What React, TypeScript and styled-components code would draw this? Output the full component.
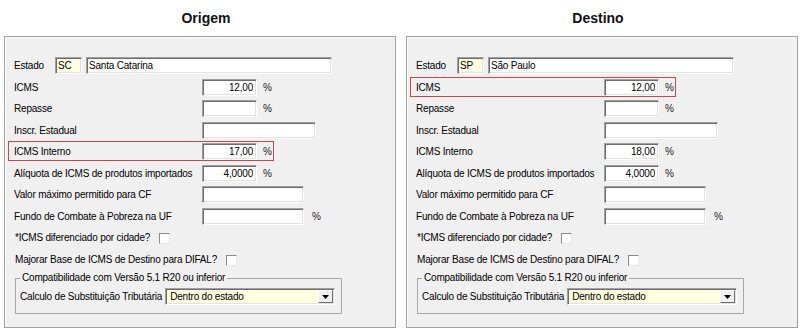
import React from "react";
import styled, { createGlobalStyle } from "styled-components";

const GlobalStyle = createGlobalStyle`
  html, body { margin: 0; padding: 0; background: #ffffff; }
  body { font-family: "Liberation Sans", Arial, sans-serif; color: #000; }
  #root { width: 800px; height: 331px; overflow: hidden; }
`;

const Page = styled.main`
  display: flex;
  gap: 10px;
  padding-left: 4px;
  width: 800px;
  height: 331px;
  box-sizing: border-box;
`;

const Column = styled.section`
  width: 392px;
  flex: none;
  display: flex;
  flex-direction: column;
`;

const Title = styled.h2<{ $shift: number }>`
  margin: 0;
  height: 36px;
  box-sizing: border-box;
  padding-top: 10px;
  padding-left: ${(p) => Math.max(0, p.$shift * 2)}px;
  padding-right: ${(p) => Math.max(0, -p.$shift * 2)}px;
  font: bold 14px/16px "Liberation Sans", Arial, sans-serif;
  text-align: center;
  color: #111;
`;

const Panel = styled.div`
  background: #f0f0f0;
  border: 1px solid #a0a0a0;
  box-shadow: inset 1px 1px 0 #ffffff;
  padding: 20px 0 13px 9px;
  font-size: 10px;
  letter-spacing: -0.2px;
`;

const Row = styled.div<{ $mark?: boolean }>`
  position: relative;
  display: flex;
  align-items: flex-start;
  height: 21.5px;

  &::after {
    content: "";
    display: ${(p) => (p.$mark ? "block" : "none")};
    position: absolute;
    left: -6px;
    top: -2px;
    width: 266px;
    height: 20px;
    box-sizing: border-box;
    border: 1px solid #c8464e;
    pointer-events: none;
  }
`;

const Label = styled.span<{ $w?: number }>`
  flex: none;
  width: ${(p) => p.$w ?? 188}px;
  height: 17px;
  line-height: 17px;
  white-space: nowrap;
`;

const Field = styled.input<{ $w: number; $tint?: boolean; $right?: boolean; $gap?: number }>`
  flex: none;
  width: ${(p) => p.$w}px;
  height: 17px;
  margin: 0 0 0 ${(p) => p.$gap ?? 0}px;
  box-sizing: border-box;
  padding: 0 ${(p) => (p.$right ? 3 : 2)}px 0 ${(p) => (p.$right ? 2 : 2)}px;
  border: 1px solid;
  border-color: #a0a0a0 #ffffff #ffffff #a0a0a0;
  box-shadow: inset 1px 1px 0 #6e6e6e, inset -1px -1px 0 #e3e3e3;
  background: ${(p) => (p.$tint ? "#ffffe1" : "#ffffff")};
  font: 10px/15px "Liberation Sans", Arial, sans-serif;
  letter-spacing: -0.2px;
  color: #000;
  text-align: ${(p) => (p.$right ? "right" : "left")};
  outline: none;
`;

const Unit = styled.span<{ $gap?: number }>`
  flex: none;
  margin-left: ${(p) => p.$gap ?? 6}px;
  height: 17px;
  line-height: 17px;
  color: #222;
`;

const CheckRow = styled.label`
  display: flex;
  align-items: flex-start;
  gap: 9px;
  height: 21.5px;
  padding-left: 1px;
  line-height: 17px;
  white-space: nowrap;
`;

const Check = styled.span`
  flex: none;
  width: 11px;
  height: 11px;
  margin-top: 4px;
  box-sizing: border-box;
  background: #ffffff;
  border: 1px solid;
  border-color: #8a8a8a #e8e8e8 #e8e8e8 #8a8a8a;
`;

const Group = styled.fieldset`
  margin: 0 0 0 1px;
  width: 327px;
  min-width: 0;
  box-sizing: border-box;
  border: 1px solid #a8a8a8;
  padding: 0 4px 8px 4px;
`;

const Legend = styled.legend`
  padding: 0 2px;
  margin: 0;
  line-height: 12px;
  font-size: 10px;
  white-space: nowrap;
`;

const GroupRow = styled.div`
  display: flex;
  align-items: flex-start;
  gap: 3px;
  margin-top: 4px;
  height: 17px;
  line-height: 17px;
  white-space: nowrap;
`;

const Select = styled.div`
  flex: none;
  display: flex;
  align-items: stretch;
  width: 170px;
  height: 17px;
  box-sizing: border-box;
  border: 1px solid;
  border-color: #a0a0a0 #ffffff #ffffff #a0a0a0;
  box-shadow: inset 1px 1px 0 #6e6e6e, inset -1px -1px 0 #e3e3e3;
  background: #ffffe1;
  padding: 1px;
`;

const SelectText = styled.span`
  flex: 1;
  padding-left: 3px;
  line-height: 13px;
`;

const DropButton = styled.span`
  flex: none;
  width: 15px;
  box-sizing: border-box;
  background: #f0f0f0;
  border: 1px solid;
  border-color: #ffffff #6e6e6e #6e6e6e #ffffff;
  display: flex;
  align-items: center;
  justify-content: center;
`;

type Side = {
  title: string;
  shift: number;
  uf: string;
  ufName: string;
  icms: string;
  interno: string;
  importados: string;
  mark: "icms" | "interno";
};

const sides: Side[] = [
  { title: "Origem", shift: 6, uf: "SC", ufName: "Santa Catarina", icms: "12,00", interno: "17,00", importados: "4,0000", mark: "interno" },
  { title: "Destino", shift: -4, uf: "SP", ufName: "São Paulo", icms: "12,00", interno: "18,00", importados: "4,0000", mark: "icms" },
];

function TaxPanel({ s }: { s: Side }) {
  return (
    <Column>
      <Title $shift={s.shift}>{s.title}</Title>
      <Panel>
        <Row>
          <Label $w={41}>Estado</Label>
          <Field $w={27} $tint readOnly value={s.uf} />
          <Field $w={246} $gap={4} readOnly value={s.ufName} />
        </Row>
        <Row $mark={s.mark === "icms"}>
          <Label>ICMS</Label>
          <Field $w={55} $right readOnly value={s.icms} />
          <Unit>%</Unit>
        </Row>
        <Row>
          <Label>Repasse</Label>
          <Field $w={55} $right readOnly value="" />
          <Unit>%</Unit>
        </Row>
        <Row>
          <Label>Inscr. Estadual</Label>
          <Field $w={114} readOnly value="" />
        </Row>
        <Row $mark={s.mark === "interno"}>
          <Label>ICMS Interno</Label>
          <Field $w={55} $right readOnly value={s.interno} />
          <Unit>%</Unit>
        </Row>
        <Row>
          <Label>Alíquota de ICMS de produtos importados</Label>
          <Field $w={55} $right readOnly value={s.importados} />
          <Unit>%</Unit>
        </Row>
        <Row>
          <Label>Valor máximo permitido para CF</Label>
          <Field $w={102} readOnly value="" />
        </Row>
        <Row>
          <Label>Fundo de Combate à Pobreza na UF</Label>
          <Field $w={102} readOnly value="" />
          <Unit $gap={8}>%</Unit>
        </Row>
        <CheckRow>
          *ICMS diferenciado por cidade?
          <Check />
        </CheckRow>
        <CheckRow>
          Majorar Base de ICMS de Destino para DIFAL?
          <Check />
        </CheckRow>
        <Group>
          <Legend>Compatibilidade com Versão 5.1 R20 ou inferior</Legend>
          <GroupRow>
            Calculo de Substituição Tributária
            <Select>
              <SelectText>Dentro do estado</SelectText>
              <DropButton>
                <svg width="7" height="4" viewBox="0 0 7 4">
                  <path d="M0 0 H7 L3.5 4 Z" fill="#000" />
                </svg>
              </DropButton>
            </Select>
          </GroupRow>
        </Group>
      </Panel>
    </Column>
  );
}

export default function App() {
  return (
    <>
      <GlobalStyle />
      <Page>
        {sides.map((s) => (
          <TaxPanel key={s.title} s={s} />
        ))}
      </Page>
    </>
  );
}
